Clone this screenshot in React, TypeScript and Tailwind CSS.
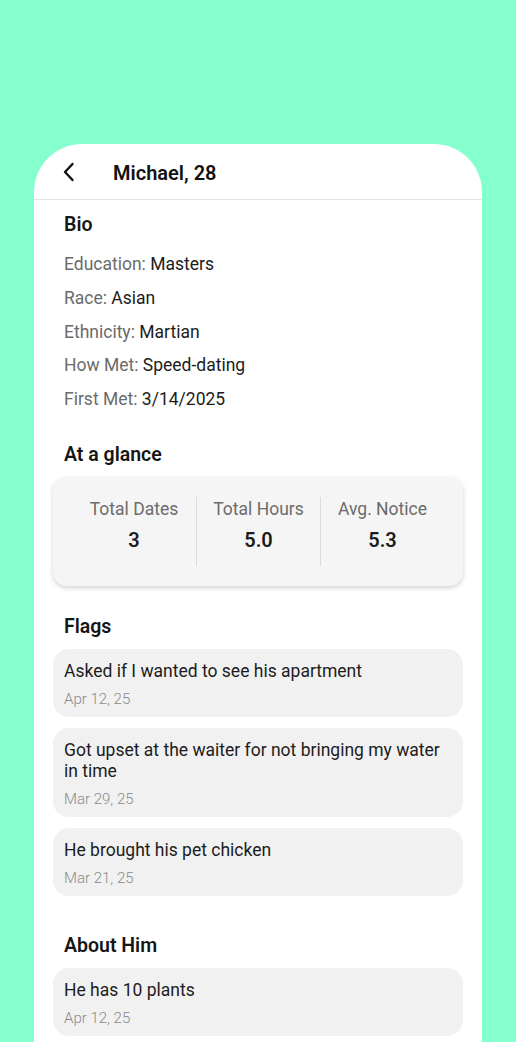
import { FC } from 'react'

type Note = { text: string; date: string }

const bio: [string, string][] = [
  ['Education', 'Masters'],
  ['Race', 'Asian'],
  ['Ethnicity', 'Martian'],
  ['How Met', 'Speed-dating'],
  ['First Met', '3/14/2025'],
]

const stats: [string, string][] = [
  ['Total Dates', '3'],
  ['Total Hours', '5.0'],
  ['Avg. Notice', '5.3'],
]

const flags: Note[] = [
  { text: 'Asked if I wanted to see his apartment', date: 'Apr 12, 25' },
  { text: 'Got upset at the waiter for not bringing my water in time', date: 'Mar 29, 25' },
  { text: 'He brought his pet chicken', date: 'Mar 21, 25' },
]

const about: Note[] = [{ text: 'He has 10 plants', date: 'Apr 12, 25' }]

const NoteCard: FC<{ note: Note }> = ({ note }) => (
  <div className="rounded-[16px] bg-[#f1f1f1] px-[11px] pb-[9px] pt-[12px]">
    <p className="text-[17.5px] leading-[21px] text-[#1c1c1c]">{note.text}</p>
    <p className="mt-[8px] text-[15px] font-light leading-[18px] text-[#8a8a8a]">{note.date}</p>
  </div>
)

const SectionTitle: FC<{ title: string; className?: string }> = ({ title, className = '' }) => (
  <h2 className={`px-[30px] text-[19.5px] font-semibold leading-[24px] text-[#161616] ${className}`}>{title}</h2>
)

export default function App() {
  return (
    <div
      className="h-[1042px] overflow-hidden bg-[#86ffcf] px-[34px] pt-[144px]"
      style={{ fontFamily: 'Roboto, "Noto Sans", sans-serif' }}
    >
      <div className="min-h-[898px] rounded-t-[48px] bg-white">
        <header className="flex h-[56px] items-center border-b border-[#e4e4e4]">
          <button className="ml-[23px] mt-[1px] flex h-[30px] w-[24px] items-center justify-center">
            <svg width="14" height="20" viewBox="0 0 14 20" fill="none">
              <path d="M10.5 2L3 10l7.5 8" stroke="#111" strokeWidth="2.4" strokeLinecap="round" strokeLinejoin="round" />
            </svg>
          </button>
          <h1 className="ml-[32px] mt-[2px] text-[20px] font-semibold text-[#111]">Michael, 28</h1>
        </header>

        <SectionTitle title="Bio" className="pt-[13px]" />
        <div className="mt-[11px] px-[30px]">
          {bio.map(([label, value]) => (
            <p key={label} className="text-[17.5px] leading-[33.75px] text-[#1c1c1c]">
              <span className="text-[#6b6b6b]">{label}: </span>
              {value}
            </p>
          ))}
        </div>

        <SectionTitle title="At a glance" className="mt-[26px]" />
        <div className="mx-[19px] mt-[10px] flex h-[109px] rounded-[14px] bg-[#f5f5f5] px-[19px] shadow-[0_2px_5px_rgba(0,0,0,0.18)]">
          {stats.map(([label, value], i) => (
            <div key={label} className="flex flex-1 flex-col items-center pt-[20px]">
              <div className={`flex h-[69px] w-full flex-col items-center ${i > 0 ? 'border-l border-[#dcdcdc]' : ''}`}>
                <span className="text-[17.5px] leading-[24px] text-[#6b6b6b]">{label}</span>
                <span className="mt-[7px] text-[20px] font-semibold leading-[24px] text-[#1c1c1c]">{value}</span>
              </div>
            </div>
          ))}
        </div>

        <SectionTitle title="Flags" className="mt-[29px]" />
        <div className="mt-[10px] flex flex-col gap-[11px] px-[19px]">
          {flags.map((f) => (
            <NoteCard key={f.text} note={f} />
          ))}
        </div>

        <SectionTitle title="About Him" className="mt-[38px]" />
        <div className="mt-[10px] flex flex-col gap-[11px] px-[19px]">
          {about.map((f) => (
            <NoteCard key={f.text} note={f} />
          ))}
        </div>
      </div>
    </div>
  )
}
